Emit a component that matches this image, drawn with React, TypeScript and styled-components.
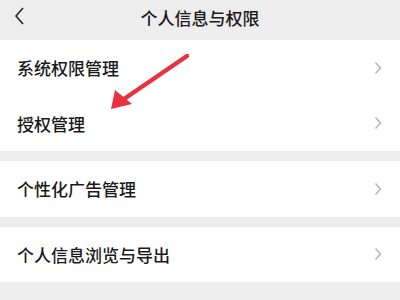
import styled, { createGlobalStyle } from 'styled-components';

const GlobalStyle = createGlobalStyle`
  html, body {
    margin: 0;
    padding: 0;
    background: #ededed;
  }
  body {
    font-family: "Noto Sans CJK SC", "Noto Sans", sans-serif;
  }
`;

const groups: string[][] = [
  ['系统权限管理', '授权管理'],
  ['个性化广告管理'],
  ['个人信息浏览与导出'],
];

const App = () => {
  return (
    <Page>
      <GlobalStyle />
      <Header>
        <BackButton>
          <svg width="12" height="20" viewBox="0 0 12 20">
            <path d="M10 2 L3 10 L10 18" fill="none" stroke="#222" strokeWidth="1.6" />
          </svg>
        </BackButton>
        <Title>个人信息与权限</Title>
      </Header>
      <Groups>
        {groups.map((rows, i) => (
          <Group key={i}>
            {rows.map(label => (
              <Row key={label}>
                <Label>{label}</Label>
                <svg width="8" height="14" viewBox="0 0 8 14">
                  <path d="M1.5 1.5 L6.5 7 L1.5 12.5" fill="none" stroke="#b3b3b3" strokeWidth="1.4" />
                </svg>
              </Row>
            ))}
          </Group>
        ))}
      </Groups>
      <Arrow width="400" height="300" viewBox="0 0 400 300">
        <line x1="187" y1="56" x2="124" y2="99" stroke="#e8323f" strokeWidth="4.5" strokeLinecap="round" />
        <polygon points="111,109 115,90 132,104" fill="#e8323f" />
      </Arrow>
    </Page>
  );
};

export default App;

const Page = styled.div`
  position: relative;
  width: 400px;
  height: 300px;
  background: #ededed;
  overflow: hidden;
`;

const Header = styled.div`
  position: relative;
  height: 40px;
  display: flex;
  align-items: center;
  justify-content: center;
  background: #ededed;
`;

const BackButton = styled.div`
  position: absolute;
  left: 13px;
  top: 6px;
  display: flex;
`;

const Title = styled.div`
  font-size: 17px;
  font-weight: 500;
  color: #1a1a1a;
  margin-top: -6px;
`;

const Groups = styled.div`
  display: flex;
  flex-direction: column;
  gap: 10px;
`;

const Group = styled.div`
  background: #fff;
  display: flex;
  flex-direction: column;
`;

const Row = styled.div`
  height: 55.5px;
  display: flex;
  align-items: center;
  justify-content: space-between;
  padding: 0 18px 0 17px;
  box-sizing: border-box;
`;

const Label = styled.div`
  font-size: 17px;
  font-weight: 500;
  color: #1a1a1a;
`;

const Arrow = styled.svg`
  position: absolute;
  left: 0;
  top: 0;
  pointer-events: none;
`;
